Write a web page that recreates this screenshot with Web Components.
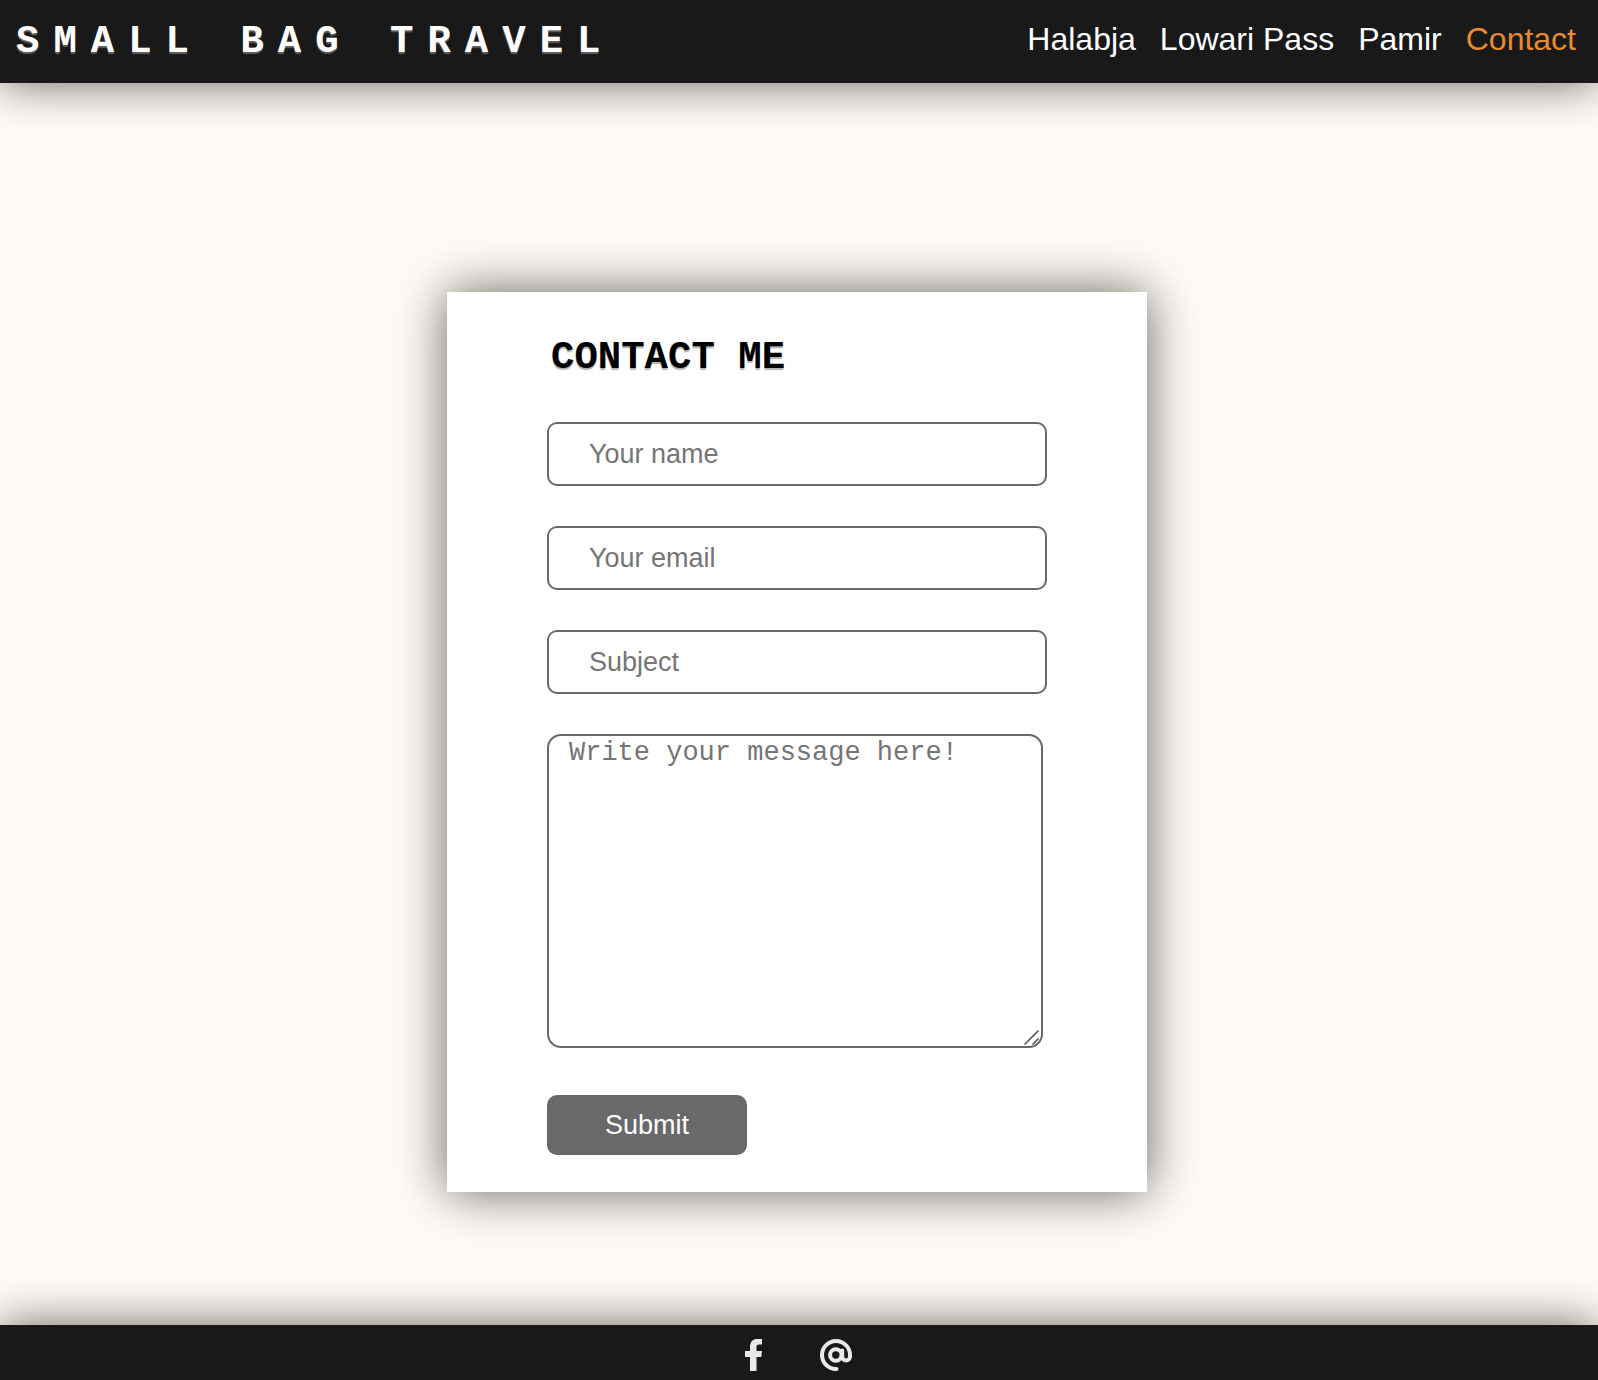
<!DOCTYPE html>
<html lang="en">
<head>
<meta charset="utf-8">
<title>Small Bag Travel – Contact</title>
<style>
  html, body { margin: 0; height: 100%; }
  body { background: #fefaf5; font-family: Helvetica, "Liberation Sans", sans-serif; overflow-x: hidden; --bar: #191919; --glow: 0 0 48px rgba(0, 0, 0, .6); }
</style>
</head>
<body>
<travel-page>
  <site-header slot="header" brand="SMALL BAG TRAVEL">
    <nav-link>Halabja</nav-link>
    <nav-link>Lowari Pass</nav-link>
    <nav-link>Pamir</nav-link>
    <nav-link current>Contact</nav-link>
  </site-header>
  <contact-card heading="CONTACT ME"></contact-card>
  <site-footer slot="footer"></site-footer>
</travel-page>
<script>
class BaseElement extends HTMLElement {
  constructor() {
    super();
    this.attachShadow({ mode: "open" });
  }
  connectedCallback() {
    this.shadowRoot.innerHTML = this.render();
  }
}

customElements.define("travel-page", class extends BaseElement {
  render() {
    return `<style>
      :host { display: flex; flex-direction: column; min-height: 100vh; overflow: hidden; }
      main { flex: 1; display: flex; justify-content: center; align-items: flex-end; padding: 48px 4px 133px 0; }
    </style>
    <slot name="header"></slot>
    <main><slot></slot></main>
    <slot name="footer"></slot>`;
  }
});

customElements.define("site-header", class extends BaseElement {
  render() {
    return `<style>
      :host { display: block; background: var(--bar); color: #fff; box-shadow: var(--glow); }
      header { display: flex; justify-content: space-between; align-items: flex-start; padding: 16px 22px 15px 16px; }
      .brand { font: bold 39px/52px "Courier New", "Liberation Mono", monospace; letter-spacing: 14px; text-shadow: 0 2px 1px rgba(255, 255, 255, .3); white-space: nowrap; }
      nav { display: flex; gap: 24px; line-height: 46px; font-size: 32px; }
    </style>
    <header>
      <div class="brand">${this.getAttribute("brand")}</div>
      <nav aria-label="Main"><slot></slot></nav>
    </header>`;
  }
});

customElements.define("nav-link", class extends BaseElement {
  render() {
    return `<style>
      :host { display: block; white-space: nowrap; }
      a { color: #fff; text-decoration: none; }
      :host([current]) a { color: #e78b2f; }
    </style>
    <a href="#"><slot></slot></a>`;
  }
});

customElements.define("contact-card", class extends BaseElement {
  render() {
    return `<style>
      :host { display: block; box-sizing: border-box; width: 700px; max-width: 100%; padding: 40px 100px 37px; background: #fff; box-shadow: var(--glow); }
      h1 { margin: 0 0 38px; padding-left: 4px; font: bold 39px/52px "Courier New", "Liberation Mono", monospace; color: #000; text-shadow: 0 2px 1px rgba(0, 0, 0, .3); }
      form { display: flex; flex-direction: column; gap: 40px; }
      input, textarea, button { box-sizing: border-box; margin: 0; border: 2px solid #696969; border-radius: 10px; font: 27px/32px "Liberation Sans", sans-serif; background: #fff; outline: 0; }
      input { width: 100%; height: 64px; padding: 0 40px; }
      .message { position: relative; margin: 0 4px 7px 0; }
      textarea { display: block; width: 100%; height: 314px; padding: 1px 20px; border-radius: 14px; font-family: "Courier New", "Liberation Mono", monospace; resize: none; }
      .grip { position: absolute; right: 4px; bottom: 3px; width: 16px; height: 16px; fill: none; stroke: #5c5c5c; stroke-width: 1.6; pointer-events: none; }
      ::placeholder { color: #757575; opacity: 1; }
      button { align-self: flex-start; width: 200px; height: 60px; padding: 0; border: 0; background: #696969; color: #fff; }
    </style>
    <h1>${this.getAttribute("heading")}</h1>
    <form>
      <input type="text" name="name" aria-label="Your name" placeholder="Your name">
      <input type="email" name="email" aria-label="Your email" placeholder="Your email">
      <input type="text" name="subject" aria-label="Subject" placeholder="Subject">
      <div class="message">
        <textarea name="message" aria-label="Message" placeholder="Write your message here!"></textarea>
        <svg class="grip" viewBox="0 0 16 16" aria-hidden="true"><path d="M1.5 15.5L15.5 1.5M9.5 15.5L15.5 9.5"/></svg>
      </div>
      <button type="submit">Submit</button>
    </form>`;
  }
});

customElements.define("site-footer", class extends BaseElement {
  render() {
    return `<style>
      :host { display: block; background: var(--bar); box-shadow: var(--glow); }
      footer { display: flex; justify-content: center; gap: 51px; padding: 14px 10px 9px 0; }
      a { display: flex; color: #ebe8e6; }
      svg { width: 32px; height: 32px; }
    </style>
    <footer>
      <a href="#" aria-label="Facebook"><svg viewBox="0 0 32 32" fill="currentColor"><path d="M13 32V18H8V12H13V8C13 2.5 15.800 0 20.500 0H25V5.500H22.200C20 5.500 19.500 6.500 19.500 8.300V12H25L24.300 18H19.500V32z"/></svg></a>
      <a href="#" aria-label="Email"><svg viewBox="0 0 32 32" fill="none" stroke="currentColor" stroke-width="4" stroke-linecap="round"><circle cx="15.800" cy="16" r="5.700"/><path d="M16.500 30H16A14 14 0 1 1 30 16V17.500A3.900 3.900 0 0 1 22.200 17.500V11.500"/></svg></a>
    </footer>`;
  }
});
</script>
</body>
</html>
